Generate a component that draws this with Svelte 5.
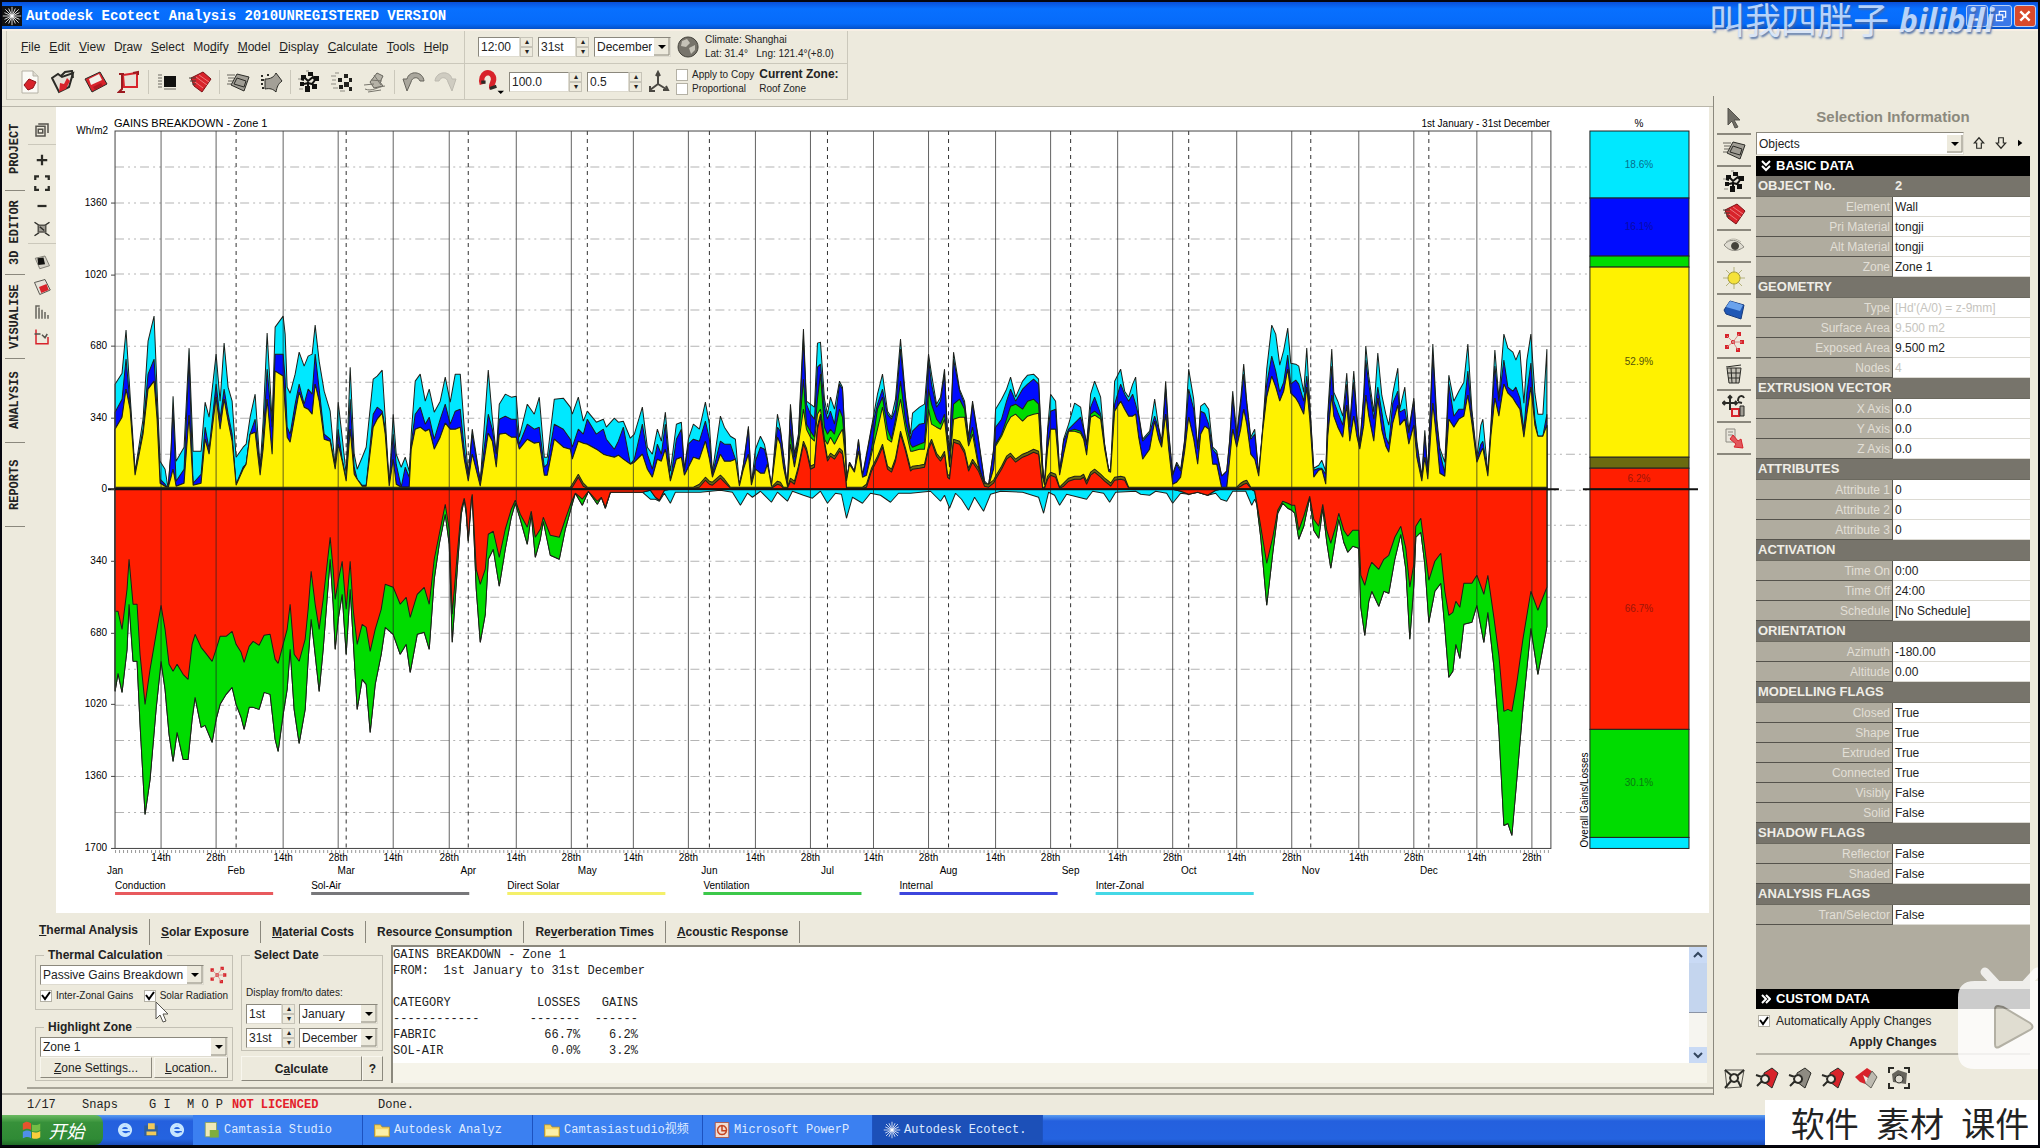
<script lang="ts">
    type Shape = { d: string; fill?: string; stroke?: string; w?: number };

    const RED = "#d8232b";
    const DARK = "#2b2b26";
    const GREY = "#8d8b82";

    const icons: Record<string, Shape[]> = {
        page: [
            { d: "M4 1h11l5 5v17H4z", fill: "#fbfaf5", stroke: "#b5b2a6" },
            { d: "M15 1v5h5", fill: "#dedbd0", stroke: "#b5b2a6" },
            { d: "M11 9l7 3-3 6-5 2-4-5z", fill: RED, stroke: "#8c1218" },
        ],
        open: [
            { d: "M1 8l6-4 4 3 11-4-4 14-10 5z", fill: "#e4e0d6", stroke: DARK, w: 2 },
            { d: "M9 13l4 1 3-6 3 3-4 8-7 3z", fill: RED },
            { d: "M10 6l4-4 7-1 1 7", stroke: DARK, w: 2 },
        ],
        save: [
            { d: "M1 9l15-7 7 12-15 8z", fill: RED, stroke: DARK },
            { d: "M5 9l10-5 3 6-11 5z", fill: "#f2efe8" },
            { d: "M9 17l8-4 2 3-8 4z", fill: "#b01920" },
        ],
        sheet: [
            { d: "M6 5l14-2v14l-13 0z", fill: "#e7e3d9", stroke: RED, w: 2 },
            { d: "M5 3v16l-3 3h6M16 3l5-1v3M2 4h5", stroke: "#9c1a20", w: 2 },
        ],
        film: [
            { d: "M9 6h12v11H9z", fill: "#11110f" },
            { d: "M3 5h4M3 8h4M3 11h4M3 14h4M3 17h4M9 19h12", stroke: "#6b6961" },
        ],
        book: [
            { d: "M3 8l12-6 8 7-9 13-8-6z", fill: RED, stroke: "#7c1015" },
            { d: "M8 7l11 8M11 5l10 7M7 12l8 6", stroke: "#ee7a7c" },
            { d: "M1 8h7M2 11h6M4 14h4", stroke: "#44423b" },
        ],
        tile: [
            { d: "M5 15L11 4l12 3-5 14z", fill: "#a09d94", stroke: DARK },
            { d: "M11 8l9 3-2 6-10-3z", stroke: DARK },
            { d: "M1 5h8M2 8h6M2 11h5M1 14h4", stroke: "#66645c" },
        ],
        slab: [
            { d: "M6 9c6 0 9-2 11-6l6 8c-4 3-5 6-6 11-3-3-6-4-11-3z", fill: "#a3a097", stroke: DARK },
            { d: "M2 6h2M2 10h3M2 14h2M3 18h2M8 5h2", stroke: DARK, w: 2 },
        ],
        nodes: [
            { d: "M4 5h5v4H4zM11 2h5v4h-5zM17 6h5v5h-5zM3 12h4v4H3zM8 16h5v6H8zM15 14h5v5h-5z", fill: "#11110f" },
            { d: "M8 8l3 3 5-4 2 3-3 4-4-1-4 1M11 12v5M7 10l-3-1", stroke: "#11110f", w: 2 },
            { d: "M1 9h3M2 19h4M9 1h3", stroke: GREY },
        ],
        dots: [
            { d: "M8 8h4v4H8zM14 4h4v4h-4zM14 12h5v5h-5zM19 8h3v4h-3zM9 15h4v4H9zM19 17h3v4h-3z", fill: "#22221e" },
            { d: "M1 6h5M2 10h4M1 14h5M3 18h5M5 3h4M10 21h5", stroke: GREY },
        ],
        runner: [
            { d: "M7 12l7-9 6 3-3 6 3 4-9 2z", fill: "#b5b2a7", stroke: "#66645c" },
            { d: "M11 5l7 10M8 10l11 1M1 15l10-1M2 19c7 3 12-2 20-3M5 22l13-2", stroke: "#77756c" },
        ],
        undo: [
            { d: "M2 9l4 12 4-9c1-5 7-6 9-1h4C22 1 8 0 6 9z", fill: "#aaa79d", stroke: "#66645c" },
        ],
        redo: [
            { d: "M22 9l-4 12-4-9c-1-5-7-6-9-1H1C2 1 16 0 18 9z", fill: "#cfccc1", stroke: "#bdbab0" },
        ],
        magnet: [
            { d: "M4 14C1 4 11 0 14 7c2 5-3 7-1 11", stroke: RED, w: 5 },
            { d: "M3 12h4M11 18l6-2", stroke: DARK, w: 3 },
            { d: "M18 20h6l-3 3z", fill: "#000" },
        ],
        axes: [
            { d: "M11 14V3M11 14l-8 6M11 14l8 5M9 6l2-4 2 4M3 16v5h5M16 20h5l-2-4", stroke: "#4a4842", w: 2 },
        ],
        globe: [
            { d: "M12 2a10 10 0 1 0 .1 0z", fill: "#77746b", stroke: "#44423b" },
            { d: "M6 6l5-2 3 4-4 4-5-1zM13 13l6-3v5l-4 4z", fill: "#c6c3b8" },
        ],
        windows: [{ d: "M4 7h12v13H4zM7 4h13v12M7 11h6v5H7z", stroke: "#55534c", w: 2 }],
        plus: [{ d: "M12 5v14M5 12h14", stroke: DARK, w: 3 }],
        fit: [{ d: "M3 8V3h5M16 3h5v5M21 16v5h-5M8 21H3v-5", stroke: DARK, w: 3 }],
        minus: [{ d: "M6 12h12", stroke: DARK, w: 3 }],
        region: [
            { d: "M2 3l6 4M22 3l-6 4M2 21l6-4M22 21l-6-4", stroke: DARK, w: 2 },
            { d: "M7 7h10v9H7z", fill: "#a09d94", stroke: "#55534c", w: 2 },
            { d: "M9 9l6 5", stroke: DARK, w: 2 },
        ],
        layers: [
            { d: "M3 7l13-3 6 13-13 4z", fill: "#d4d1c6", stroke: "#66645c" },
            { d: "M6 7l8-1 2 9-9 1z", fill: "#11110f" },
        ],
        layersRed: [
            { d: "M2 6l14-4 7 14-14 6z", fill: "#e7e3d9", stroke: DARK },
            { d: "M8 12l10-4 3 8-10 4z", fill: RED },
        ],
        bars: [{ d: "M4 3v18M8 6v15M12 9v12M16 12v9M20 16v5M3 4h6", stroke: "#66645c", w: 2 }],
        graph: [
            { d: "M4 2v19h17M20 12v9", stroke: RED, w: 2 },
            { d: "M2 8h8M12 9l4 4 3-5", stroke: "#55534c", w: 2 },
        ],
        cursor: [{ d: "M6 2l12 12-6 0 4 7-3 1-3-7-4 4z", fill: "#6f6d65", stroke: "#55534c" }],
        eye: [
            { d: "M2 11c5-7 14-6 20 2-7 5-14 5-20-2z", fill: "#dedbd0", stroke: GREY },
            { d: "M13 8a4 4 0 1 0 .1 0z", fill: "#44423b" },
            { d: "M4 8c5-4 10-4 15 0", stroke: "#b5b2a6" },
        ],
        sun: [
            { d: "M12 1v22M1 12h22M4 4l16 16M20 4L4 20", stroke: "#b5b37c" },
            { d: "M12 6a6 6 0 1 0 .1 0z", fill: "#f5e23a", stroke: "#a39a35" },
        ],
        blueBox: [
            { d: "M2 12l6-9 14 4-3 14-15-5z", fill: "#1f57b5", stroke: "#173a7c" },
            { d: "M8 3l13 4-3 6L4 9z", fill: "#6aa2ec" },
        ],
        scatter: [
            { d: "M3 4h4v4H3zM15 2h4v4h-4zM18 10h4v4h-4zM9 10h4v4H9zM3 15h4v4H3zM14 18h4v4h-4z", fill: RED },
            { d: "M5 6l6 6 6-8M11 12l9 0M11 12l5 8M5 17l6-5", stroke: "#d98a88" },
        ],
        bin: [
            { d: "M5 6h14l-2 15H7z", fill: "#c2bfb4", stroke: DARK },
            { d: "M9 6l1 15M14 6v15M5 11h13M6 16h12M4 5l15-2", stroke: DARK },
        ],
        move: [
            { d: "M8 2v14M1 9h14M6 4l2-2 2 2M3 7L1 9l2 2M13 7l2 2-2 2M16 7c0-6 5-6 6-3M20 9l-4-1", stroke: DARK, w: 2 },
            { d: "M10 15h7v7h-7z", fill: "#f3dedb", stroke: RED, w: 2 },
            { d: "M18 12h4v10h-4z", fill: "#a09d94", stroke: DARK },
        ],
        paste: [
            { d: "M4 3h9v13H4zM6 6h5M6 9h5", fill: "#e8e5db", stroke: GREY },
            { d: "M8 13l3-4 5 6 3-2 2 9-9-1 2-3z", fill: "#e2575c", stroke: RED },
        ],
        find: [
            { d: "M3 4h19l-3 17-14 1z", stroke: "#55534c" },
            { d: "M12 8a4 4 0 1 0 .1 0M9 15l-6 7M3 4l6 5M22 4l-7 6M16 15l3 6", stroke: DARK, w: 2 },
        ],
        findRed: [
            { d: "M9 7l8-5 6 5-6 15-8-6z", fill: RED, stroke: DARK },
            { d: "M10 9a4 4 0 1 0 .1 0M7 15l-5 5M1 9l6 2", fill: "#efece2", stroke: DARK, w: 2 },
        ],
        findGrey: [
            { d: "M9 7l8-5 6 5-6 15-8-6z", fill: "#8e8b82", stroke: DARK },
            { d: "M10 9a4 4 0 1 0 .1 0M7 15l-5 5M1 9l6 2", fill: "#efece2", stroke: DARK, w: 2 },
        ],
        half: [
            { d: "M1 11L13 2l6 4-5 13-8-3z", fill: RED },
            { d: "M18 5l5 6-6 11-6-5z", fill: "#bdbab0", stroke: "#66645c" },
            { d: "M9 9l5 3-2 5z", fill: "#efece2" },
        ],
        shot: [
            { d: "M2 7V2h5M17 2h5v5M22 17v5h-5M7 22H2v-5", stroke: DARK, w: 2 },
            { d: "M5 8l6-4 9 3-1 11-13-2z", fill: "#66645c" },
            { d: "M12 9a4 4 0 1 0 .1 0z", fill: "#dedbd0", stroke: DARK },
        ],
        star: [{ d: "M12 1v22M1 12h22M4 4l16 16M20 4L4 20M8 3l8 18M16 3L8 21M3 8l18 8M21 8L3 16", stroke: "#fff", w: 1 }],
        folder: [
            { d: "M2 5h8l2 3h10v13H2z", fill: "#f6d767", stroke: "#b28f2c" },
            { d: "M4 11h16v8H4z", fill: "#fdf0a8" },
        ],
        camtasia: [
            { d: "M3 2h15v19H3z", fill: "#efe9b8", stroke: "#8aa04d" },
            { d: "M9 12h12v10H9z", fill: "#7fae3e" },
        ],
        slides: [
            { d: "M3 2h18v20H3z", fill: "#f0ddd3", stroke: "#b3462b" },
            { d: "M12 6a6 6 0 1 0 .1 0M12 6v7h6", stroke: "#c4421f", w: 2 },
        ],
        browser: [{ d: "M12 3a9 9 0 1 0 .1 0M5 12h13c0-8-12-8-12 0 0 7 9 8 12 4", stroke: "#c7e6ff", w: 3 }],
        player: [
            { d: "M3 6h18v14H3z", fill: "#2f5f9e" },
            { d: "M8 3h9v8H8zM6 14h13v5H6z", fill: "#f0c95b" },
        ],
        flag: [
            { d: "M2 5c4-3 6-2 9 0v7c-3-2-5-2-9 0z", fill: "#e5532d" },
            { d: "M12 6c3 1 6 1 9-1v7c-3 2-6 2-9 1z", fill: "#74bd45" },
            { d: "M2 14c4-2 6-2 9 0v7c-3-2-5-2-9 0z", fill: "#4f8fe8" },
            { d: "M12 14c3 1 6 1 9-1v7c-3 2-6 2-9 1z", fill: "#f8cd3c" },
        ],
        up: [{ d: "M12 3l8 9h-4v9H8v-9H4z", stroke: DARK, w: 2 }],
        down: [{ d: "M12 21l8-9h-4V3H8v9H4z", stroke: DARK, w: 2 }],
        next: [{ d: "M6 2l13 10-13 10z", fill: "#000" }],
        minimise: [{ d: "M5 18h9", stroke: "#fff", w: 4 }],
        restore: [{ d: "M4 10h11v10H4zM9 9V4h11v10h-4", stroke: "#fff", w: 2 }],
        close: [{ d: "M4 4l16 16M20 4L4 20", stroke: "#fff", w: 4 }],
    };

    // accelerator letter is given by its index
    const menus: [string, number][] = [
        ["File", 0], ["Edit", 0], ["View", 0], ["Draw", 1], ["Select", 0], ["Modify", 2],
        ["Model", 0], ["Display", 0], ["Calculate", 0], ["Tools", 0], ["Help", 0],
    ];
    const toolGroups = [
        ["page", "open", "save", "sheet"],
        ["film", "book"],
        ["tile", "slab"],
        ["nodes", "dots", "runner"],
        ["undo", "redo"],
    ];
    const pages = ["PROJECT", "3D EDITOR", "VISUALISE", "ANALYSIS", "REPORTS"];
    const viewTools = [["windows"], ["plus", "fit", "minus", "region"], ["layers", "layersRed", "bars", "graph"]];
    const sideTools = ["cursor", "tile", "nodes", "book", "eye", "sun", "blueBox", "scatter", "bin", "move", "paste"];
    const findTools = ["find", "findRed", "findGrey", "findRed", "half", "shot"];
    const analysisTabs: [string, number][] = [
        ["Thermal Analysis", 0], ["Solar Exposure", 0], ["Material Costs", 0],
        ["Resource Consumption", 9], ["Reverberation Times", 2], ["Acoustic Response", 0],
    ];
    const tasks = [
        { icon: "camtasia", name: "Camtasia Studio" },
        { icon: "folder", name: "Autodesk Analyz" },
        { icon: "folder", name: "Camtasiastudio视频" },
        { icon: "slides", name: "Microsoft PowerP" },
        { icon: "star", name: "Autodesk Ecotect." },
    ];

    type Row = { label: string; value: string; dim?: boolean };
    const sections: { title: string; rows: Row[] }[] = [
        {
            title: "OBJECT No.",
            rows: [
                { label: "Element", value: "Wall" },
                { label: "Pri Material", value: "tongji" },
                { label: "Alt Material", value: "tongji" },
                { label: "Zone", value: "Zone 1" },
            ],
        },
        {
            title: "GEOMETRY",
            rows: [
                { label: "Type", value: "[Hd'(A/0) = z-9mm]", dim: true },
                { label: "Surface Area", value: "9.500 m2", dim: true },
                { label: "Exposed Area", value: "9.500 m2" },
                { label: "Nodes", value: "4", dim: true },
            ],
        },
        {
            title: "EXTRUSION VECTOR",
            rows: [
                { label: "X Axis", value: "0.0" },
                { label: "Y Axis", value: "0.0" },
                { label: "Z Axis", value: "0.0" },
            ],
        },
        {
            title: "ATTRIBUTES",
            rows: [
                { label: "Attribute 1", value: "0" },
                { label: "Attribute 2", value: "0" },
                { label: "Attribute 3", value: "0" },
            ],
        },
        {
            title: "ACTIVATION",
            rows: [
                { label: "Time On", value: "0:00" },
                { label: "Time Off", value: "24:00" },
                { label: "Schedule", value: "[No Schedule]" },
            ],
        },
        {
            title: "ORIENTATION",
            rows: [
                { label: "Azimuth", value: "-180.00" },
                { label: "Altitude", value: "0.00" },
            ],
        },
        {
            title: "MODELLING FLAGS",
            rows: [
                { label: "Closed", value: "True" },
                { label: "Shape", value: "True" },
                { label: "Extruded", value: "True" },
                { label: "Connected", value: "True" },
                { label: "Visibly", value: "False" },
                { label: "Solid", value: "False" },
            ],
        },
        {
            title: "SHADOW FLAGS",
            rows: [
                { label: "Reflector", value: "False" },
                { label: "Shaded", value: "False" },
            ],
        },
        { title: "ANALYSIS FLAGS", rows: [{ label: "Tran/Selector", value: "False" }] },
    ];

    // chart geometry, in svg units
    const LEFT = 115;
    const RIGHT = 1550;
    const TOP = 131;
    const ZERO = 489;
    const BOTTOM = 848;

    const gridY = Array.from({ length: 19 }, (_, i) => Math.round(TOP + (i + 1) * 35.85));
    const scale: [number, string][] = [
        [203, "1360"], [275, "1020"], [346, "680"], [418, "340"], [489, "0"],
        [561, "340"], [633, "680"], [704, "1020"], [776, "1360"], [848, "1700"],
    ];
    const mid = [161, 283, 393, 516, 633, 755, 873, 995, 1117, 1236, 1358, 1476];
    const late = [216, 338, 449, 571, 688, 810, 928, 1050, 1172, 1291, 1413, 1531];
    const months: [number, string][] = [
        [115, "Jan"], [236, "Feb"], [346, "Mar"], [468, "Apr"], [587, "May"], [709, "Jun"],
        [827, "Jul"], [948, "Aug"], [1070, "Sep"], [1188, "Oct"], [1310, "Nov"], [1428, "Dec"],
    ];
    const legend = [
        { name: "Conduction", color: "#e85a5e" },
        { name: "Sol-Air", color: "#77777a" },
        { name: "Direct Solar", color: "#f4f06a" },
        { name: "Ventilation", color: "#3cc84a" },
        { name: "Internal", color: "#3d46dd" },
        { name: "Inter-Zonal", color: "#45d8e6" },
    ];

    // x, inter-zonal, internal, ventilation, solar, conduction: running totals above zero.
    // Four numbers mean no ventilation and no conduction that day.
    const gains = [
        [115, 105, 77, 60], [122, 116, 90, 72], [126, 159, 130, 100], [130, 95, 85, 80], [135, 18, 16, 14], [143, 70, 60, 55],
        [148, 148, 115, 100], [154, 173, 130, 108], [157, 100, 80, 70], [160, 28, 10, 6], [165, 20, 5, 3], [168, 1, 1, 1],
        [171, 40, 38, 12], [173, 93, 80, 20], [176, 28, 8, 3], [184, 42, 20, 6], [189, 141, 130, 74], [193, 38, 6, 4],
        [201, 38, 15, 6], [205, 87, 62, 50], [209, 72, 40, 35], [216, 135, 105, 92], [220, 88, 70, 60], [224, 146, 100, 90],
        [228, 102, 75, 68], [232, 88, 55, 48], [236, 32, 5, 4], [243, 42, 22, 20], [246, 45, 25, 25], [250, 72, 55, 55],
        [255, 95, 70, 57], [260, 22, 20, 14], [263, 68, 50, 40], [267, 156, 120, 90], [272, 68, 62, 35], [275, 162, 135, 118],
        [283, 173, 135, 113], [285, 155, 110, 80], [287, 102, 62, 52], [290, 96, 55, 47], [295, 115, 85, 75], [299, 137, 105, 97],
        [304, 123, 85, 82], [308, 133, 100, 80], [312, 135, 95, 75], [315, 164, 135, 105], [319, 128, 100, 88], [324, 98, 55, 50],
        [330, 78, 50, 48], [335, 22, 22, 20], [338, 87, 60, 45], [342, 52, 30, 28], [346, 15, 10, 8], [350, 122, 90, 60],
        [354, 35, 22, 15], [357, 20, 10, 10], [362, 32, 4, 3], [366, 42, 4, 3], [373, 110, 75, 62], [377, 113, 82, 70],
        [382, 119, 78, 76], [385, 72, 60, 55], [389, 5, 5, 3], [393, 75, 55, 30], [396, 35, 25, 5], [401, 22, 2, 2],
        [405, 32, 22, 2], [409, 18, 12, 2], [411, 55, 45, 40], [415, 108, 75, 60], [420, 115, 82, 62], [425, 88, 65, 58],
        [429, 100, 72, 60], [434, 77, 50, 40], [440, 88, 70, 52], [445, 112, 85, 66], [450, 87, 65, 60], [455, 115, 78, 60],
        [460, 115, 80, 62], [464, 62, 40, 30], [468, 15, 14, 8], [472, 60, 55, 35], [480, 8, 8, 3], [488, 119, 75, 56],
        [492, 72, 60, 48], [496, 35, 35, 22], [499, 85, 70, 55], [505, 95, 73, 56], [511, 92, 70, 52], [516, 93, 70, 52],
        [519, 52, 45, 40], [527, 85, 65, 50], [534, 75, 60, 46], [539, 92, 62, 47], [544, 32, 22, 14], [547, 32, 25, 14],
        [554, 90, 65, 50], [563, 91, 60, 42], [570, 82, 50, 40], [572, 75, 42, 30, 30, 2], [578, 92, 60, 48, 48, 12], [583, 68, 55, 46, 46, 3],
        [587, 78, 70, 45], [596, 67, 55, 40], [603, 70, 60, 35], [606, 62, 50, 34], [614, 71, 40, 32], [618, 67, 48, 34],
        [623, 68, 62, 30], [630, 51, 25, 25], [634, 55, 30, 27], [642, 82, 65, 35], [647, 42, 35, 20], [652, 35, 20, 12],
        [657, 60, 45, 30], [661, 48, 35, 28], [665, 77, 65, 40], [670, 18, 8, 8], [676, 65, 50, 30], [681, 67, 60, 32],
        [684, 20, 18, 14], [688, 50, 45, 22], [693, 65, 50, 32], [699, 60, 48, 30, 30, 2], [705, 87, 68, 48, 48, 9], [709, 65, 50, 30, 30, 5],
        [712, 17, 15, 12, 12, 4], [720, 73, 48, 35, 35, 11], [724, 62, 45, 28, 28, 7], [730, 53, 45, 28], [735, 50, 30, 30], [739, 4, 4, 3],
        [743, 25, 24, 20], [748, 63, 60, 35], [751, 5, 5, 4], [755, 40, 28, 20], [760, 53, 42, 16], [764, 45, 40, 16],
        [767, 30, 28, 25], [771, 3, 3, 3], [777, 75, 62, 52, 52, 5], [780, 60, 58, 45, 45, 4], [783, 35, 33, 22], [787, 3, 3, 3],
        [790, 85, 80, 60, 45, 8], [794, 35, 32, 22, 22, 5], [798, 55, 50, 50, 45, 20], [803, 160, 150, 110, 80, 45], [806, 88, 85, 65, 60, 38], [810, 85, 75, 58, 52, 20],
        [814, 82, 70, 52, 48, 22], [817, 146, 122, 90, 75, 60], [820, 147, 125, 115, 80, 72], [824, 90, 82, 62, 50, 45], [827, 75, 70, 55, 45, 28], [830, 92, 78, 60, 52, 33],
        [834, 80, 65, 55, 45, 30], [839, 108, 105, 80, 55, 38], [842, 102, 100, 72, 60, 35], [845, 45, 40, 35, 30, 12], [846, 8, 8, 8, 8, 1], [849, 27, 27, 25],
        [854, 18, 18, 17], [858, 50, 48, 38], [862, 14, 13, 12], [866, 35, 33, 14, 14, 2], [871, 62, 60, 40, 35, 18], [877, 95, 85, 80, 60, 30],
        [882, 115, 100, 92, 82, 42], [887, 78, 75, 60, 50, 20], [891, 72, 70, 50, 47, 17], [895, 90, 80, 70, 65, 28], [900, 150, 140, 108, 90, 55], [905, 92, 88, 68, 60, 38],
        [910, 55, 50, 45, 38, 18], [912, 76, 58, 42, 38, 20], [919, 82, 65, 45, 40, 21], [924, 85, 66, 47, 40, 22], [928, 135, 130, 100, 80, 40], [931, 115, 105, 85, 65, 47],
        [936, 85, 82, 70, 62, 33], [940, 92, 88, 65, 60, 28], [944, 120, 115, 75, 70, 35], [947, 55, 50, 45, 42, 12], [949, 40, 38, 25, 22, 10], [953, 137, 130, 85, 70, 47],
        [959, 100, 98, 90, 72, 45], [964, 88, 85, 80, 72, 36], [968, 52, 50, 45, 43, 18], [972, 88, 85, 62, 55, 27], [978, 50, 48, 25, 22, 18], [984, 8, 6, 3, 3, 3],
        [988, 4, 4, 3, 3, 2], [993, 40, 38, 20, 20, 6], [995, 80, 62, 45, 43, 10], [1001, 90, 70, 55, 53, 20], [1006, 100, 88, 70, 65, 30], [1010, 112, 100, 83, 72, 33],
        [1015, 92, 88, 85, 75, 27], [1022, 108, 100, 80, 68, 32], [1027, 114, 105, 88, 73, 34], [1033, 115, 110, 90, 75, 37], [1038, 110, 105, 85, 76, 35], [1042, 25, 22, 12, 12, 1],
        [1044, 5, 5, 4], [1047, 60, 58, 40, 40, 10], [1050, 95, 78, 60, 60, 14], [1055, 88, 80, 60, 60, 12], [1059, 18, 17, 14], [1063, 50, 48, 35, 35, 3],
        [1068, 65, 60, 58, 58, 8], [1074, 86, 66, 60, 58, 10], [1080, 82, 72, 58, 56, 10], [1083, 62, 60, 52, 50, 12], [1086, 45, 44, 35, 34, 5], [1090, 95, 82, 75, 72, 14],
        [1094, 108, 92, 78, 74, 17], [1100, 92, 75, 73, 70, 12], [1104, 45, 44, 42, 40, 8], [1108, 20, 19, 18, 18, 5], [1110, 20, 20, 17, 17, 3], [1114, 108, 85, 78, 78, 9],
        [1120, 120, 105, 88, 88, 10], [1124, 98, 95, 80, 80, 9], [1128, 92, 88, 73], [1132, 105, 95, 73], [1135, 112, 85, 75], [1138, 75, 73, 52],
        [1142, 50, 48, 30], [1149, 58, 56, 40], [1154, 90, 73, 68], [1158, 62, 60, 50], [1161, 48, 45, 42], [1165, 108, 100, 75],
        [1168, 58, 55, 40], [1172, 15, 14, 5], [1176, 27, 25, 7], [1180, 20, 18, 12], [1184, 50, 48, 38], [1188, 120, 100, 72],
        [1193, 90, 80, 50], [1197, 42, 40, 25], [1200, 83, 78, 55], [1204, 86, 76, 63], [1208, 80, 65, 60], [1212, 42, 40, 25],
        [1216, 38, 35, 25], [1221, 13, 13, 1], [1226, 18, 18, 1], [1229, 50, 48, 30], [1232, 98, 92, 60], [1236, 55, 50, 42],
        [1240, 90, 85, 60, 60, 3], [1243, 125, 115, 80, 80, 5], [1246, 88, 85, 65, 65, 6], [1250, 52, 50, 35], [1254, 60, 55, 30], [1258, 15, 15, 13],
        [1262, 62, 60, 58], [1266, 120, 105, 92], [1271, 164, 133, 113], [1275, 155, 118, 102], [1279, 124, 97, 88], [1283, 139, 107, 98],
        [1287, 161, 134, 120], [1290, 126, 105, 96], [1295, 125, 109, 91], [1298, 123, 105, 86], [1303, 97, 88, 75], [1306, 141, 113, 102],
        [1309, 86, 83, 70], [1313, 21, 19, 12], [1318, 24, 21, 19], [1321, 29, 21, 20], [1325, 18, 15, 5], [1327, 75, 70, 53],
        [1331, 140, 123, 94], [1333, 97, 88, 73], [1337, 88, 77, 62], [1342, 73, 64, 52], [1346, 116, 105, 84], [1349, 64, 62, 48],
        [1353, 118, 107, 73], [1356, 75, 70, 53], [1359, 45, 43, 40], [1363, 96, 91, 64], [1365, 143, 129, 94], [1368, 113, 105, 73],
        [1373, 77, 70, 48], [1377, 136, 102, 91], [1381, 94, 77, 59], [1385, 75, 52, 43], [1388, 64, 45, 37], [1392, 96, 86, 66],
        [1397, 121, 98, 84], [1399, 80, 77, 64], [1404, 102, 80, 70], [1408, 59, 56, 45], [1413, 91, 88, 64], [1416, 48, 45, 32],
        [1421, 13, 10, 8], [1424, 59, 53, 32], [1427, 18, 17, 10], [1432, 145, 134, 86], [1436, 70, 64, 48], [1439, 41, 37, 16],
        [1444, 27, 16, 13], [1448, 114, 105, 70], [1453, 88, 73, 62], [1458, 98, 80, 70], [1463, 107, 80, 73], [1467, 145, 118, 94],
        [1471, 80, 75, 66], [1476, 32, 30, 27], [1480, 64, 45, 37], [1482, 70, 48, 41], [1487, 16, 15, 13], [1490, 64, 59, 53],
        [1494, 139, 123, 91], [1498, 91, 88, 73], [1503, 155, 129, 105], [1507, 141, 102, 96], [1512, 137, 98, 91], [1515, 129, 102, 86],
        [1519, 139, 91, 80], [1523, 86, 59, 52], [1526, 129, 96, 75], [1530, 155, 126, 102], [1534, 96, 70, 64], [1537, 75, 53, 53],
        [1542, 75, 53, 53], [1546, 140, 75, 64],
    ].map((p) => (p.length === 4 ? [...p, p[3], 1] : p));

    // x, conduction, ventilation, inter-zonal: running totals below zero
    const losses = [
        [115, 122, 202], [118, 122, 184], [122, 140, 203], [127, 100, 160], [129, 70, 115], [133, 115, 172], [137, 115, 172],
        [140, 165, 235], [145, 215, 325], [150, 180, 290], [156, 145, 220], [161, 116, 172], [165, 140, 200], [169, 175, 245],
        [173, 182, 272], [177, 175, 243], [183, 185, 270], [188, 190, 270], [192, 155, 230], [195, 145, 208], [201, 158, 238],
        [205, 163, 236], [212, 172, 253], [216, 160, 230], [220, 147, 215], [226, 147, 205], [232, 142, 198], [236, 155, 215],
        [241, 163, 228], [244, 173, 240], [249, 157, 218], [253, 152, 218], [259, 156, 220], [264, 146, 203], [270, 145, 205],
        [275, 170, 250], [278, 174, 262], [283, 155, 225], [287, 140, 200], [290, 115, 160], [294, 165, 220], [299, 172, 254],
        [305, 150, 220], [308, 120, 170], [311, 82, 130], [315, 115, 165], [319, 140, 202], [323, 110, 160], [330, 48, 70],
        [333, 80, 115], [335, 110, 160], [338, 92, 130], [342, 72, 105], [346, 120, 165], [350, 72, 100], [353, 120, 150],
        [357, 155, 220], [362, 135, 190], [366, 138, 195], [370, 162, 243], [375, 140, 195], [381, 120, 165], [385, 95, 138],
        [393, 98, 145], [400, 115, 165], [406, 108, 155], [410, 128, 183], [417, 105, 145], [424, 98, 143], [429, 115, 160],
        [434, 70, 90], [439, 45, 55], [445, 15, 25], [449, 40, 55], [452, 125, 153], [457, 65, 80], [461, 20, 25],
        [464, 9, 10], [466, 20, 25], [468, 50, 52], [471, 10, 12], [472, 5, 6], [476, 80, 100], [480, 95, 153],
        [485, 80, 125], [488, 45, 70], [493, 42, 60], [499, 68, 97], [505, 40, 60], [511, 20, 28], [515, 11, 14],
        [520, 25, 30], [527, 38, 55], [531, 22, 25], [535, 48, 68], [540, 40, 50], [543, 28, 32], [550, 46, 66],
        [559, 48, 70], [565, 30, 40], [571, 13, 18], [575, 4, 4], [582, 10, 16], [588, 2, 2], [597, 12, 15],
        [601, 8, 8], [605, 18, 19], [610, 3, 3], [642, 3, 3], [650, 1, 1, 10], [655, 8, 8, 10], [659, 11, 11, 12],
        [664, 1, 1, 4], [670, 0, 0, 14], [675, 0, 0, 3], [700, 0, 0, 3], [720, 0, 0, 1], [732, 0, 0, 3], [740, 0, 0, 16],
        [747, 0, 0, 4], [752, 0, 0, 8], [760, 0, 0, 2], [771, 0, 0, 13], [777, 0, 0, 3], [787, 0, 0, 12], [792, 0, 0, 2],
        [803, 0, 0, 6], [812, 0, 0, 9], [820, 0, 0, 2], [827, 0, 0, 14], [835, 0, 0, 4], [841, 0, 0, 5], [846, 0, 0, 29],
        [852, 0, 0, 8], [862, 0, 0, 14], [870, 0, 0, 4], [880, 0, 0, 6], [890, 0, 0, 13], [898, 0, 0, 4], [910, 0, 0, 4],
        [930, 0, 0, 2], [940, 0, 0, 12], [944, 0, 0, 6], [949, 0, 0, 19], [955, 0, 0, 4], [961, 0, 0, 10], [968, 0, 0, 21],
        [974, 0, 0, 8], [983, 0, 0, 22], [990, 0, 0, 5], [1000, 0, 0, 2], [1022, 0, 0, 3], [1038, 0, 0, 8], [1043, 0, 0, 24],
        [1048, 0, 0, 3], [1054, 0, 0, 6], [1059, 0, 0, 16], [1066, 0, 0, 5], [1086, 0, 0, 10], [1092, 0, 0, 2], [1103, 0, 0, 4],
        [1109, 0, 0, 13], [1115, 0, 0, 3], [1135, 0, 0, 2], [1140, 0, 0, 5], [1149, 0, 0, 6], [1155, 0, 0, 2], [1166, 0, 0, 4],
        [1172, 0, 0, 14], [1180, 2, 2, 4], [1188, 5, 5, 5], [1197, 3, 3, 3], [1207, 6, 6, 6], [1215, 1, 1, 4], [1220, 0, 0, 10], [1226, 0, 0, 12],
        [1232, 0, 0, 2], [1245, 0, 0, 2], [1251, 0, 0, 16], [1254, 2, 2, 10], [1256, 13, 15], [1260, 37, 48], [1266, 74, 116],
        [1272, 48, 64], [1277, 21, 24], [1282, 12, 14], [1287, 14, 19], [1291, 16, 21], [1294, 16, 24], [1298, 41, 50],
        [1303, 27, 37], [1309, 7, 8], [1313, 30, 41], [1318, 37, 49], [1322, 15, 19], [1326, 41, 53], [1330, 54, 79],
        [1335, 37, 48], [1338, 24, 30], [1343, 41, 53], [1347, 47, 63], [1352, 41, 57], [1358, 41, 59], [1360, 86, 118],
        [1364, 96, 146], [1368, 80, 112], [1371, 73, 102], [1378, 80, 117], [1383, 70, 102], [1388, 66, 104], [1394, 48, 70],
        [1400, 37, 45], [1405, 59, 80], [1409, 98, 150], [1413, 75, 96], [1415, 37, 48], [1420, 29, 43], [1424, 59, 75],
        [1428, 91, 133], [1434, 72, 102], [1440, 64, 94], [1444, 102, 139], [1448, 126, 188], [1452, 123, 182], [1455, 112, 155],
        [1459, 118, 169], [1463, 94, 135], [1471, 94, 133], [1476, 86, 116], [1483, 105, 153], [1487, 86, 123], [1493, 128, 177],
        [1498, 166, 241], [1503, 222, 336], [1507, 220, 334], [1511, 222, 346], [1516, 193, 289], [1522, 150, 219], [1530, 102, 139],
        [1537, 121, 185], [1546, 98, 137],
    ].map((p) => (p.length === 3 ? [...p, p[2]] : p));

    const area = (rows: number[][], column: number, sign: number) => {
        const line = rows.map((r) => `${r[0]},${ZERO - sign * r[column]}`).join(" ");
        return `${rows[0][0]},${ZERO} ${line} ${rows[rows.length - 1][0]},${ZERO}`;
    };

    const layers = [
        { points: area(gains, 1, 1), fill: "#00e8ff" },
        { points: area(gains, 2, 1), fill: "#000cff" },
        { points: area(gains, 3, 1), fill: "#00dc00" },
        { points: area(gains, 4, 1), fill: "#fff200" },
        { points: area(gains.map((g) => [g[0], g[5] > 1 ? g[5] + 3 : 2]), 1, 1), fill: "#6b6a10" },
        { points: area(gains, 5, 1), fill: "#ff1e00" },
        { points: area(losses, 3, -1), fill: "#00e8ff" },
        { points: area(losses, 2, -1), fill: "#00dc00" },
        { points: area(losses, 1, -1), fill: "#ff1e00" },
    ];

    const share = [
        { y: 131, h: 67, fill: "#00e8ff", text: "18.6%", ink: "#066f8c" },
        { y: 198, h: 58, fill: "#000cff", text: "16.1%", ink: "#0a0aa8" },
        { y: 256, h: 11, fill: "#00dc00" },
        { y: 267, h: 190, fill: "#fff200", text: "52.9%", ink: "#55520a" },
        { y: 457, h: 11, fill: "#6b6a10" },
        { y: 468, h: 21, fill: "#ff1e00", text: "6.2%", ink: "#9c1608" },
        { y: 489, h: 240, fill: "#ff1e00", text: "66.7%", ink: "#9c1608" },
        { y: 729, h: 108, fill: "#00dc00", text: "30.1%", ink: "#0a7a12" },
        { y: 837, h: 11, fill: "#00e8ff" },
    ];

    const report = `GAINS BREAKDOWN - Zone 1
FROM:  1st January to 31st December

CATEGORY            LOSSES   GAINS
------------       -------  ------
FABRIC               66.7%    6.2%
SOL-AIR               0.0%    3.2%`;

    let activeTab = $state(0);
    let interZonal = $state(true);
    let solar = $state(true);
    let autoApply = $state(true);
</script>

{#snippet icon(name: string, size = 24)}
    <svg class="icon" width={size} height={size} viewBox="0 0 24 24" aria-hidden="true">
        {#each icons[name] as s}
            <path d={s.d} fill={s.fill ?? "none"} stroke={s.stroke ?? "none"} stroke-width={s.w ?? 1} />
        {/each}
    </svg>
{/snippet}

{#snippet accel(text: string, at: number)}<span>{text.slice(0, at)}<u>{text[at]}</u>{text.slice(at + 1)}</span>{/snippet}

{#snippet spin(label: string, value: string, kind: string)}
    <span class="spin {kind}">
        <input type="text" aria-label={label} {value} />
        <span class="arrows">
            <button aria-label="{label} up">▴</button>
            <button aria-label="{label} down">▾</button>
        </span>
    </span>
{/snippet}

<div class="app">
    <header class="title">
        <span class="logo">{@render icon("star", 20)}</span>
        <h1>Autodesk Ecotect Analysis 2010UNREGISTERED VERSION</h1>
        <button class="win" aria-label="Minimise">{@render icon("minimise", 14)}</button>
        <button class="win" aria-label="Restore">{@render icon("restore", 14)}</button>
        <button class="win close" aria-label="Close">{@render icon("close", 14)}</button>
        <div class="watermark"><span>叫我四胖子</span><em>bilibili</em></div>
    </header>

    <div class="bars">
        <div class="bar first">
            <nav class="menu">
                {#each menus as [text, at]}
                    <button>{@render accel(text, at)}</button>
                {/each}
            </nav>
            <div class="settings">
                {@render spin("Time", "12:00", "time")}
                {@render spin("Day", "31st", "day")}
                <select class="month" aria-label="Month"><option>December</option></select>
                {@render icon("globe")}
                <p class="small">Climate: Shanghai<br />Lat: 31.4&deg; &nbsp; Lng: 121.4&deg;(+8.0)</p>
            </div>
        </div>
        <div class="bar">
            <div class="tools">
                {#each toolGroups as group}
                    <div class="group">
                        {#each group as name}
                            <button aria-label={name}>{@render icon(name)}</button>
                        {/each}
                    </div>
                {/each}
            </div>
            <div class="settings">
                {@render icon("magnet", 26)}
                {@render spin("Snap grid", "100.0", "wide")}
                {@render spin("Step", "0.5", "time")}
                {@render icon("axes")}
                <div class="ticks small">
                    <label><input type="checkbox" />Apply to Copy</label>
                    <label><input type="checkbox" />Proportional</label>
                </div>
                <p class="small zone"><b>Current Zone:</b><br />Roof Zone</p>
            </div>
        </div>
    </div>

    <div class="work">
        <main>
            <div class="upper">
                <nav class="pages">
                    {#each pages as page}
                        <button>{page}</button>
                    {/each}
                </nav>
                <div class="viewtools">
                    {#each viewTools as group}
                        <div>
                            {#each group as name}
                                <button aria-label={name}>{@render icon(name, 18)}</button>
                            {/each}
                        </div>
                    {/each}
                </div>

                <svg class="chart" viewBox="56 107 1652 806" role="img" aria-label="Gains breakdown">
                    {#each gridY as y}
                        <line class="dots" x1={LEFT} x2="1589" y1={y} y2={y} />
                    {/each}
                    {#each months.slice(1) as [x]}
                        <line class="month-line" x1={x} x2={x} y1={TOP} y2={BOTTOM} />
                    {/each}
                    {#each layers as layer}
                        <polygon points={layer.points} fill={layer.fill} />
                    {/each}
                    {#each [...mid, ...late] as x}
                        <line class="rule" x1={x} x2={x} y1={TOP} y2={BOTTOM} />
                    {/each}
                    <rect class="frame" x={LEFT} y={TOP} width={RIGHT - LEFT} height={BOTTOM - TOP} />
                    <line class="zero" x1="108" x2="1558" y1={ZERO} y2={ZERO} />
                    <line class="daily" x1={LEFT} x2={RIGHT} y1="851" y2="851" />

                    <text class="head" x="114" y="127">GAINS BREAKDOWN - Zone 1</text>
                    <text x="1549" y="127" text-anchor="end">1st January - 31st December</text>
                    <text x="1638" y="127" text-anchor="middle">%</text>
                    <text x="108" y="134" text-anchor="end">Wh/m2</text>
                    {#each scale as [y, text]}
                        <text x="107" y={y + 3} text-anchor="end">{text}</text>
                        <line class="frame" x1="111" x2={LEFT} y1={y} y2={y} />
                    {/each}
                    {#each mid as x}
                        <text {x} y="861" text-anchor="middle">14th</text>
                    {/each}
                    {#each late as x}
                        <text {x} y="861" text-anchor="middle">28th</text>
                    {/each}
                    {#each months as [x, text]}
                        <text {x} y="874" text-anchor="middle">{text}</text>
                    {/each}
                    {#each legend as item, i}
                        <text x={115 + i * 196} y="889">{item.name}</text>
                        <line class="key" x1={115 + i * 196} x2={273 + i * 196} y1="893" y2="893" stroke={item.color} />
                    {/each}

                    {#each share as part}
                        <rect class="share" x="1589" y={part.y} width="99" height={part.h} fill={part.fill} />
                        {#if part.text}
                            <text x="1638" y={part.y + part.h / 2 + 3} text-anchor="middle" fill={part.ink}>{part.text}</text>
                        {/if}
                    {/each}
                    <line class="zero" x1="1582" x2="1697" y1={ZERO} y2={ZERO} />
                    <text transform="translate(1587 847) rotate(-90)">Overall Gains/Losses</text>
                </svg>
            </div>

            <nav class="tabs">
                {#each analysisTabs as [text, at], i}
                    <button class:active={activeTab === i} onclick={() => (activeTab = i)}>{@render accel(text, at)}</button>
                {/each}
            </nav>

            <div class="lower">
                <div class="column calc">
                    <fieldset>
                        <legend>Thermal Calculation</legend>
                        <div class="line">
                            <select class="grow" aria-label="Calculation"><option>Passive Gains Breakdown</option></select>
                            {@render icon("scatter", 20)}
                        </div>
                        <div class="line checks">
                            <label><input type="checkbox" bind:checked={interZonal} />Inter-Zonal Gains</label>
                            <label><input type="checkbox" bind:checked={solar} />Solar Radiation</label>
                        </div>
                        <svg class="pointer" width="16" height="22" viewBox="0 0 16 22" aria-hidden="true">
                            <path d="M1 1l12 12H8l3 7-3 1-3-7-4 4z" fill="#fff" stroke="#55534c" />
                        </svg>
                    </fieldset>
                    <fieldset>
                        <legend>Highlight Zone</legend>
                        <div class="line">
                            <select class="grow" aria-label="Zone"><option>Zone 1</option></select>
                        </div>
                        <div class="line buttons">
                            <button class="push wide">{@render accel("Zone Settings...", 0)}</button>
                            <button class="push">{@render accel("Location..", 0)}</button>
                        </div>
                    </fieldset>
                </div>

                <div class="column date">
                    <fieldset>
                        <legend>Select Date</legend>
                        <p class="small">Display from/to dates:</p>
                        <div class="line">
                            {@render spin("From day", "1st", "day")}
                            <select class="grow" aria-label="From month"><option>January</option></select>
                        </div>
                        <div class="line">
                            {@render spin("To day", "31st", "day")}
                            <select class="grow" aria-label="To month"><option>December</option></select>
                        </div>
                    </fieldset>
                    <div class="run">
                        <button class="push wide">{@render accel("Calculate", 1)}</button>
                        <button class="push">?</button>
                    </div>
                </div>

                <div class="report">
                    <pre>{report}</pre>
                    <div class="scroll">
                        <button aria-label="Scroll up"><svg width="10" height="8"><path d="M1 6l4-4 4 4" /></svg></button>
                        <span class="thumb"></span>
                        <button aria-label="Scroll down"><svg width="10" height="8"><path d="M1 2l4 4 4-4" /></svg></button>
                    </div>
                    <div class="hscroll"></div>
                </div>
            </div>
        </main>

        <aside>
            <div class="side">
                <div class="sidetools">
                    {#each sideTools as name}
                        <button aria-label={name}>{@render icon(name)}</button>
                    {/each}
                </div>
                <section class="panel">
                    <h2>Selection Information</h2>
                    <div class="pick">
                        <select aria-label="Selection type"><option>Objects</option></select>
                        <button aria-label="Previous">{@render icon("up", 14)}</button>
                        <button aria-label="Next">{@render icon("down", 14)}</button>
                        <button aria-label="More">{@render icon("next", 8)}</button>
                    </div>
                    <h3><svg width="10" height="12"><path d="M1 1l4 4 4-4M1 6l4 4 4-4" /></svg>BASIC DATA</h3>
                    <table>
                        {#each sections as section, i}
                            <tbody>
                                <tr class="section">
                                    <th>{section.title}</th>
                                    <td>{i === 0 ? "2" : ""}</td>
                                </tr>
                                {#each section.rows as row}
                                    <tr>
                                        <th scope="row">{row.label}</th>
                                        <td class:dim={row.dim}>{row.value}</td>
                                    </tr>
                                {/each}
                            </tbody>
                        {/each}
                    </table>
                    <div class="rest"></div>
                    <h3><svg width="10" height="12"><path d="M1 2l4 4-4 4M5 2l4 4-4 4" /></svg>CUSTOM DATA</h3>
                    <label class="auto"><input type="checkbox" bind:checked={autoApply} />Automatically Apply Changes</label>
                    <button class="apply">Apply Changes</button>
                </section>
            </div>
            <div class="findtools">
                {#each findTools as name}
                    <button aria-label={name}>{@render icon(name)}</button>
                {/each}
            </div>
            <svg class="tv" width="86" height="104" viewBox="0 0 86 104" aria-hidden="true">
                <path d="M28 6l12 13M80 6L68 19" stroke="#fff" stroke-width="9" stroke-linecap="round" />
                <path
                    fill-rule="evenodd"
                    d="M18 15h80v88H18C6 103 1 97 1 86V32C1 21 6 15 18 15zM41 40q-3 0-3 4v34q0 5 4 3l31-17q5-3 0-7L46 41z"
                    fill="#fff"
                />
                <path d="M41 40q-3 0-3 4v34q0 5 4 3l31-17q5-3 0-7L46 41z" fill="#dedbcf" stroke="#a5a297" stroke-width="2" />
            </svg>
        </aside>
    </div>

    <footer class="status">
        <span class="count">1/17</span>
        <span class="snaps">Snaps</span>
        <span class="gi">G I</span>
        <span class="mop">M O P</span>
        <b>NOT LICENCED</b>
        <span>Done.</span>
    </footer>
    <div class="taskbar">
        <button class="start">{@render icon("flag", 22)}<i>开始</i></button>
        <div class="quick">{@render icon("browser", 16)}{@render icon("player", 18)}{@render icon("browser", 16)}</div>
        {#each tasks as task, i}
            <button class="task" class:current={i === 4}><span>{@render icon(task.icon, 18)}</span>{task.name}</button>
        {/each}
    </div>
    <div class="caption"><span>软件</span><span>素材</span><span>课件</span></div>
</div>

<style>
    :global(body) {
        margin: 0;
        background: #000;
    }

    .app {
        position: relative;
        border: 2px solid #05060f;
        background: #edeadd;
        color: #222;
        font: 12px/14px "Liberation Sans", Arial, sans-serif;
        overflow: hidden;
    }

    button,
    input,
    select {
        box-sizing: border-box;
        margin: 0;
        font: inherit;
        color: inherit;
    }

    button {
        display: flex;
        align-items: center;
        justify-content: center;
        padding: 0;
        border: 0;
        background: none;
        white-space: nowrap;
    }

    p {
        margin: 0;
    }

    .icon {
        display: block;
        flex: none;
    }

    .title {
        position: relative;
        display: flex;
        align-items: center;
        height: 27px;
        background: linear-gradient(#0a4fd8, #0870ff 25%, #066bfa 80%, #0450c8);
        color: #fff;
    }

    .logo {
        background: #111;
    }

    h1 {
        flex: 1;
        margin: 0 0 0 4px;
        font: bold 14px/18px "Liberation Mono", monospace;
    }

    .win {
        width: 22px;
        height: 22px;
        margin-right: 2px;
        border: 1px solid #b9d0f8;
        border-radius: 3px;
        background: #3b78e8;
    }

    .close {
        background: #d84a2c;
    }

    .watermark {
        position: absolute;
        top: 0;
        right: 44px;
        z-index: 1;
        display: flex;
        align-items: flex-start;
        gap: 10px;
        color: #d6e5fb;
        opacity: 0.85;
        text-shadow: 1px 2px 2px #4669a5;
    }

    .watermark span {
        font: 36px/32px "Noto Sans CJK SC", sans-serif;
    }

    .watermark em {
        font: italic bold 32px/36px "Open Sans", sans-serif;
    }

    .bars {
        height: 77px;
        border-top: 2px solid #f8efe4;
        box-sizing: border-box;
    }

    .bar {
        display: flex;
        box-sizing: border-box;
        width: 842px;
        height: 36px;
        margin-left: 4px;
        border: solid #cbc8bb;
        border-width: 0 1px 1px;
    }

    .bar.first {
        height: 33px;
    }

    .menu {
        display: flex;
        flex: none;
        gap: 9px;
        box-sizing: border-box;
        width: 458px;
        padding-left: 14px;
        border-right: 1px solid #cbc8bb;
    }

    .tools {
        display: flex;
        flex: none;
        align-items: center;
        box-sizing: border-box;
        width: 458px;
        padding-left: 5px;
        border-right: 1px solid #cbc8bb;
    }

    .group {
        display: flex;
        gap: 8px;
        padding: 0 7px 0 5px;
        border-right: 1px solid #cbc8bb;
    }

    .group:last-child {
        border: 0;
    }

    .group button {
        width: 25px;
    }

    .settings {
        display: flex;
        flex: 1;
        align-items: center;
        gap: 5px;
        padding-left: 13px;
    }

    .small {
        font-size: 10px;
        line-height: 14px;
        white-space: nowrap;
    }

    .zone b {
        font-size: 12px;
    }

    .ticks label {
        display: flex;
        align-items: center;
        gap: 4px;
    }

    input[type="checkbox"] {
        appearance: none;
        flex: none;
        width: 12px;
        height: 12px;
        border: 1px solid #b4b1a5;
        background: #fff;
    }

    input[type="checkbox"]:checked {
        background: #fff url('data:image/svg+xml,<svg xmlns="http://www.w3.org/2000/svg" viewBox="0 0 10 10"><path d="M1 4l3 4 5-7" fill="none" stroke="black" stroke-width="2"/></svg>');
    }

    .spin {
        display: flex;
        flex: none;
        height: 20px;
    }

    .spin input {
        width: 38px;
        padding: 0 2px;
        border: 1px solid #a9a69a;
        border-color: #8b887d #dedbd0 #dedbd0 #8b887d;
        background: #fff;
    }

    .spin.time input {
        width: 42px;
    }

    .spin.wide input {
        width: 60px;
    }

    .arrows {
        display: flex;
        flex-direction: column;
    }

    .arrows button {
        width: 13px;
        height: 10px;
        border: 1px solid #c6c3b7;
        font-size: 8px;
        line-height: 6px;
    }

    select {
        appearance: none;
        height: 20px;
        min-width: 0;
        padding: 0 18px 0 2px;
        border: 1px solid #8b887d;
        border-color: #8b887d #dedbd0 #dedbd0 #8b887d;
        border-radius: 0;
        background: #fff url('data:image/svg+xml,<svg xmlns="http://www.w3.org/2000/svg" width="16" height="18"><path d="M0 0h16v18H0z" fill="%23edeadd"/><path d="M0 17h15V0" fill="none" stroke="%238b887d"/><path d="M4 7h8l-4 4z"/></svg>') right center no-repeat;
    }

    .month {
        width: 77px;
    }

    .work {
        display: flex;
    }

    main {
        flex: 1;
        min-width: 0;
        border-bottom: 2px solid #a7a498;
    }

    .upper {
        display: flex;
        border-top: 1px solid #b9b6aa;
        background: #edeadd;
    }

    .pages {
        display: flex;
        flex: none;
        flex-direction: column;
        align-items: center;
        width: 26px;
    }

    .pages button {
        height: 84px;
        padding: 8px 3px;
        border-top: 1px solid #8b887d;
        writing-mode: vertical-rl;
        transform: rotate(180deg);
        font: bold 12px/14px "Liberation Mono", monospace;
    }

    .viewtools {
        flex: none;
        width: 28px;
        padding-top: 8px;
    }

    .viewtools div {
        display: flex;
        flex-direction: column;
        gap: 5px;
        padding: 6px 2px 5px;
        border-bottom: 1px solid #cbc8bb;
    }

    .viewtools div:last-child {
        gap: 7px;
        padding-top: 9px;
        border: 0;
    }

    .chart {
        display: block;
        flex: 1;
        min-width: 0;
        height: auto;
        margin-right: 4px;
        background: #fff;
        font-size: 10px;
    }

    .chart text {
        white-space: pre;
    }

    .chart .head {
        font-size: 11px;
    }

    polygon {
        stroke: #1d1f1a;
        stroke-width: 1;
        stroke-linejoin: bevel;
    }

    .dots {
        stroke: #b4b4b4;
        stroke-dasharray: 9 4 2 4 2 4;
    }

    .month-line {
        stroke: #333;
        stroke-dasharray: 4 4;
    }

    .rule {
        stroke: #222;
        opacity: 0.7;
    }

    .frame {
        fill: none;
        stroke: #444;
    }

    .zero {
        stroke: #111;
        stroke-width: 2;
    }

    .daily {
        stroke: #999;
        stroke-width: 3;
        stroke-dasharray: 1 3;
    }

    .key {
        stroke-width: 3;
    }

    .share {
        stroke: #222;
    }

    .tabs {
        display: flex;
        align-items: center;
        box-sizing: border-box;
        height: 32px;
        padding: 5px 0 0 26px;
    }

    .tabs button {
        height: 22px;
        padding: 0 11px;
        border-right: 1px solid #8b887d;
        font-weight: bold;
        font-size: 12px;
    }

    .tabs .active {
        height: 26px;
        padding-bottom: 3px;
    }

    .lower {
        display: flex;
        gap: 8px;
        margin: 0 0 4px 25px;
        padding: 0 6px 4px 8px;
        border-bottom: 2px solid #a7a498;
    }

    .column {
        display: flex;
        flex: none;
        flex-direction: column;
        justify-content: space-between;
        height: 136px;
        padding-top: 3px;
        box-sizing: border-box;
    }

    .calc {
        width: 198px;
    }

    .date {
        width: 142px;
    }

    fieldset {
        position: relative;
        margin: 0;
        padding: 3px 4px 2px;
        border: 1px solid #c3c0b4;
        min-width: 0;
    }

    legend {
        margin-left: 4px;
        padding: 0 4px;
        font-weight: bold;
        line-height: 14px;
    }

    .line {
        display: flex;
        align-items: center;
        gap: 4px;
    }

    .date .line {
        margin-top: 4px;
    }

    .date .small {
        margin-top: 21px;
    }

    .date .spin input {
        width: 36px;
    }

    .grow {
        flex: 1;
    }

    .checks {
        justify-content: space-between;
        height: 22px;
        font-size: 10px;
        white-space: nowrap;
    }

    .checks label {
        display: flex;
        align-items: center;
        gap: 4px;
    }

    .pointer {
        position: absolute;
        left: 119px;
        bottom: -14px;
        z-index: 1;
    }

    .push {
        flex: 1;
        height: 21px;
        border: 1px solid #f8f6ee;
        border-right-color: #8b887d;
        border-bottom-color: #8b887d;
    }

    .buttons {
        gap: 2px;
    }

    .buttons .wide {
        flex: none;
        width: 112px;
    }

    .run {
        display: flex;
        font-weight: bold;
    }

    .run .push {
        height: 25px;
    }

    .run .wide {
        flex: none;
        width: 121px;
    }

    .report {
        display: grid;
        flex: 1;
        grid-template: 1fr 20px / 1fr 18px;
        box-sizing: border-box;
        height: 138px;
        border-top: 2px solid #8b887d;
        border-left: 2px solid #8b887d;
        background: #fff;
    }

    pre {
        margin: 0;
        font: 12px/16px "Liberation Mono", monospace;
    }

    .scroll {
        display: flex;
        flex-direction: column;
        background: #f6f5f0;
    }

    .scroll button {
        height: 16px;
        background: #c9daf5;
    }

    .scroll path {
        fill: none;
        stroke: #33465e;
        stroke-width: 2;
    }

    .thumb {
        height: 49px;
        margin-bottom: auto;
        border-bottom: 1px solid #8b94a5;
        background: #c4d5ee;
    }

    .hscroll {
        grid-column: 1 / -1;
        background: #f6f4ea;
    }

    aside {
        position: relative;
        display: flex;
        flex: none;
        flex-direction: column;
        width: 325px;
        margin-top: -10px;
        border-left: 1px solid #8b887d;
        box-sizing: border-box;
    }

    .side {
        display: flex;
    }

    .sidetools {
        flex: none;
        width: 42px;
        padding-top: 7px;
    }

    .sidetools button {
        width: 34px;
        height: 32px;
        margin-left: 3px;
        border-bottom: 2px solid #8b887d;
    }

    .panel {
        flex: 1;
        margin-right: 8px;
        border-bottom: 2px solid #b9b6aa;
    }

    h2 {
        margin: 11px 0 5px;
        color: #8b897d;
        font: bold 15px/20px "Liberation Sans", sans-serif;
        text-align: center;
    }

    .pick {
        display: flex;
        align-items: flex-start;
        gap: 8px;
        height: 24px;
    }

    .pick button {
        height: 22px;
    }

    .pick select {
        width: 208px;
        height: 23px;
    }

    h3 {
        display: flex;
        align-items: center;
        gap: 5px;
        height: 20px;
        margin: 0;
        padding-left: 5px;
        background: #000;
        color: #fff;
        font-size: 13px;
    }

    h3 path {
        fill: none;
        stroke: #fff;
        stroke-width: 2;
    }

    table {
        width: 100%;
        table-layout: fixed;
        border-collapse: separate;
        border-spacing: 0;
    }

    th,
    td {
        box-sizing: border-box;
        height: 20px;
        padding: 0 2px;
        border-bottom: 1px solid #55534c;
        text-align: left;
        white-space: nowrap;
    }

    th {
        border-right: 1px solid #55534c;
        background: #b0ac9f;
        color: #e2dfd6;
        font-weight: normal;
        text-align: right;
    }

    td {
        background: #fff;
        border-bottom-color: #dcdad3;
    }

    .dim {
        color: #c6c4be;
    }

    .section th,
    .section td {
        height: 21px;
        border-color: #6b695f;
        background: #77746b;
        color: #efede6;
        font-weight: bold;
        font-size: 13px;
        text-align: left;
    }

    .section th {
        border-right-color: #77746b;
    }

    .rest {
        height: 64px;
        background: #b0ac9f;
    }

    .auto {
        display: flex;
        align-items: center;
        gap: 6px;
        height: 24px;
        padding-left: 2px;
    }

    .apply {
        width: 100%;
        height: 18px;
        margin-bottom: 2px;
        font-weight: bold;
    }

    .findtools {
        display: flex;
        gap: 9px;
        padding: 11px 8px 0;
    }

    .tv {
        position: absolute;
        right: -5px;
        bottom: 25px;
        opacity: 0.8;
    }

    .status {
        display: flex;
        align-items: center;
        height: 20px;
        padding-left: 25px;
        font: 12px/14px "Liberation Mono", monospace;
    }

    .count {
        width: 55px;
    }

    .snaps {
        width: 67px;
    }

    .gi {
        width: 38px;
    }

    .mop {
        width: 45px;
    }

    .status b {
        width: 146px;
        color: #e3202a;
    }

    .taskbar {
        display: flex;
        height: 30px;
        background: linear-gradient(#5a9cf0, #2460de 20%, #2463e0 80%, #1b4cb8);
        color: #dfeaff;
        font: 12px/16px "Liberation Mono", "Noto Sans CJK SC", monospace;
    }

    .start {
        gap: 6px;
        width: 101px;
        border-radius: 0 8px 8px 0;
        background: linear-gradient(#6cbb62, #37913a 25%, #2f8a35 80%, #206b26);
        color: #fff;
        font: 18px/24px "Noto Sans CJK SC", sans-serif;
    }

    .quick {
        display: flex;
        align-items: center;
        gap: 9px;
        width: 76px;
        padding-left: 14px;
    }

    .task {
        justify-content: flex-start;
        gap: 3px;
        width: 170px;
        padding-left: 10px;
        border-right: 1px solid #1d52c0;
        background: #3b80f1;
    }

    .current {
        background: #1c50b8;
    }

    .caption {
        position: absolute;
        right: 0;
        bottom: 0;
        display: flex;
        justify-content: space-around;
        box-sizing: border-box;
        width: 273px;
        height: 45px;
        padding-left: 17px;
        background: #fff;
        color: #222;
        font: 34px/46px "Noto Sans CJK SC", sans-serif;
    }
</style>
